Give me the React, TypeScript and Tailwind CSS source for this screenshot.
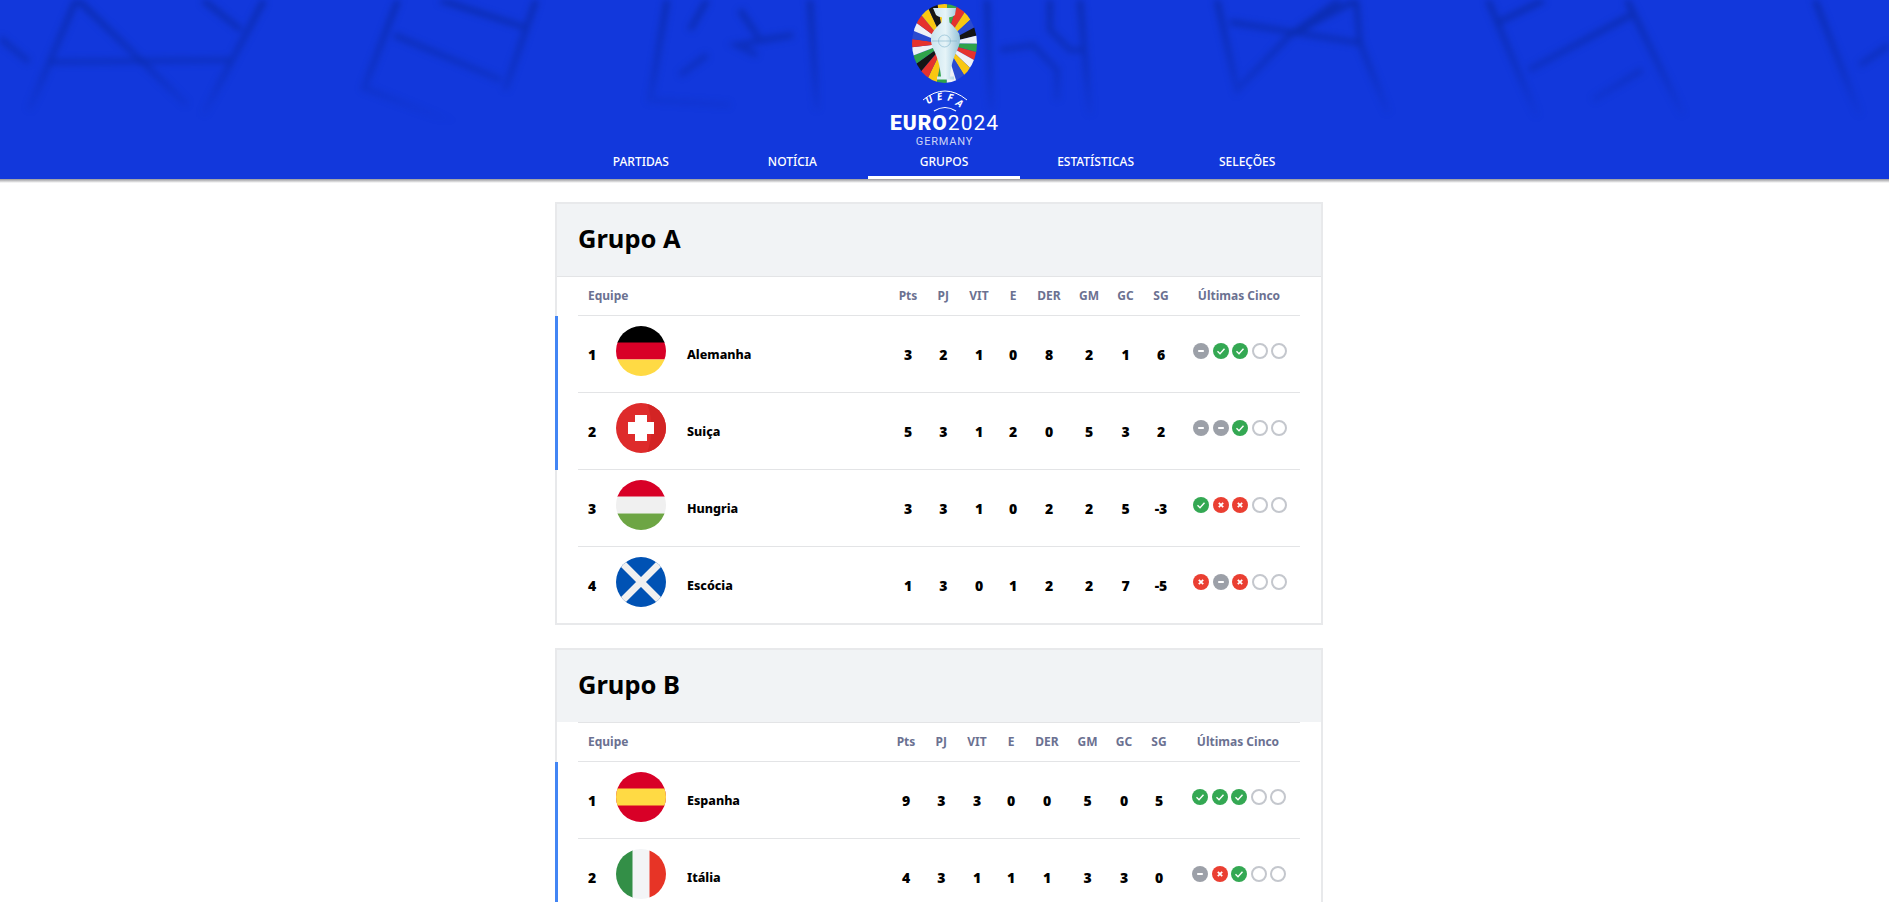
import React from "react";

type Res = "w" | "d" | "l" | "e";

type Team = {
  name: string;
  flag: React.ReactNode;
  stats: (number | string)[];
  form: Res[];
};

const FONT = "[font-family:'Noto_Sans',sans-serif]";

const GRID_A = "grid grid-cols-[310.5px_39px_31.5px_40px_28px_44px_36px_37px_34px_122px]";
const GRID_B = "grid grid-cols-[308.5px_39px_31.5px_40px_28px_44px_37px_36px_34px_124px]";

const HEADS = ["Pts", "PJ", "VIT", "E", "DER", "GM", "GC", "SG"];

const NAV = ["PARTIDAS", "NOTÍCIA", "GRUPOS", "ESTATÍSTICAS", "SELEÇÕES"];

// background doodles, traced from the header
const DOODLES = [
  "M76 0L29 110",
  "M78 0L187 105",
  "M50 62L230 60",
  "M203 0L241 30",
  "M264 0L203 115",
  "M0 38L29 62",
  "M398 0L364 88L459 125",
  "M394 35L501 80",
  "M440 0L524 27",
  "M536 0L505 90",
  "M667 0L650 100L730 105",
  "M810 0L817 110",
  "M707 0L690 30",
  "M740 10L760 40L793 35L737 45L757 55",
  "M707 55L680 75",
  "M987 0L991 110",
  "M1050 0L1050 30L1070 50L1083 50",
  "M1080 0L1090 115",
  "M1000 50L1033 45L1057 70L1057 100",
  "M1217 0L1237 90L1290 35L1340 0",
  "M1230 22L1360 43L1388 113",
  "M1356 0L1360 43",
  "M1300 30L1356 0",
  "M1488 0L1537 117",
  "M1499 22L1544 0",
  "M1529 70L1631 15",
  "M1627 0L1683 115",
  "M1593 100L1642 70",
  "M1815 0L1860 115",
  "M1860 65L1889 45",
];

const WEDGES = [
  "#f9c712", "#38a84a", "#e5322d", "#f9c712", "#2a4bd0", "#151515", "#eef1f6", "#2fa34a",
  "#e5322d", "#eef1f6", "#f9c712", "#2a4bd0", "#eef1f6", "#2fa34a", "#f9c712", "#e5322d",
  "#151515", "#2fa34a", "#eef1f6", "#e5322d", "#2a4bd0", "#eef1f6", "#e5322d", "#f9c712",
  "#151515",
];

function Logo() {
  const n = WEDGES.length;
  return (
    <svg width="65" height="79" viewBox="0 0 65 79" className="block">
      <defs>
        <clipPath id="oval">
          <ellipse cx="32.5" cy="39.5" rx="32.5" ry="39.5" />
        </clipPath>
        <linearGradient id="cup" x1="0" y1="0" x2="1" y2="0">
          <stop offset="0" stopColor="#c9e3ee" />
          <stop offset="0.5" stopColor="#e6f4f8" />
          <stop offset="1" stopColor="#94c2d8" />
        </linearGradient>
      </defs>
      <g clipPath="url(#oval)">
        {WEDGES.map((c, i) => {
          const a0 = (i / n) * 2 * Math.PI - 0.18;
          const a1 = ((i + 1) / n) * 2 * Math.PI - 0.18;
          const p = (a: number) => `${32.5 + Math.sin(a) * 60} ${39.5 - Math.cos(a) * 60}`;
          return <path key={i} d={`M32.5 39.5L${p(a0)}L${p(a1)}Z`} fill={c} />;
        })}
      </g>
      <path
        d="M21 4h23l-1 7c-2 1.500-4 2-6 2.500l.5 5c4 3 7 7 9.500 11 2 5 1 11-2 17-3.500 7-6 15-7 26h4v3h-17v-3h4c-1-11-3.500-19-7-26-3-6-4-12-2-17 2.500-4 5.500-8 9.500-11l.5-5c-2-.5-4-1-6-2.500z"
        fill="url(#cup)"
      />
      <circle cx="32.500" cy="37" r="6" fill="none" stroke="#7fb4cb" strokeWidth="0.6" />
      <path d="M20 37h25" stroke="#7fb4cb" strokeWidth="0.6" />
    </svg>
  );
}

function Header() {
  return (
    <header className="relative z-10 h-[179px] w-full overflow-hidden bg-[#1238dc]">
      <svg
        width="1889"
        height="179"
        viewBox="0 0 1889 179"
        className="absolute left-0 top-0 blur-[3px]"
      >
        <defs>
          <linearGradient id="fade" gradientUnits="userSpaceOnUse" x1="0" y1="0" x2="0" y2="122">
            <stop offset="0" stopColor="#0a2aa8" stopOpacity="0.8" />
            <stop offset="0.6" stopColor="#0a2aa8" stopOpacity="0.45" />
            <stop offset="1" stopColor="#0a2aa8" stopOpacity="0" />
          </linearGradient>
        </defs>
        {DOODLES.map((d) => (
          <path key={d} d={d} fill="none" stroke="url(#fade)" strokeWidth="6" />
        ))}
      </svg>

      <div className="relative flex h-full flex-col items-center pt-[4px]">
        <Logo />
        <svg width="50" height="24" viewBox="0 0 50 24" className="mt-[6px] block">
          <text
            className={FONT}
            fontSize="10"
            fontWeight="700"
            fontStyle="italic"
            fill="#fff"
            x="8 17.500 27 35"
            y="15.500 11.500 11.500 15.500"
            rotate="-32 -11 11 32"
          >
            UEFA
          </text>
          <path d="M14 22Q25 15 36 22" fill="none" stroke="#fff" strokeWidth="1.200" />
          <path d="M3 11Q25 -7 47 11" fill="none" stroke="#fff" strokeWidth="1" />
        </svg>
        <div className="-mt-[1px] flex h-[23px] items-center font-['Roboto',sans-serif] text-[21px] leading-[23px] tracking-[1px] text-white">
          <span className="font-black">EURO</span>
          <span className="font-normal">2024</span>
        </div>
        <div className="h-[13px] font-['Roboto',sans-serif] text-[11px] leading-[13px] tracking-[0.8px] text-[#cdd5f6]">
          GERMANY
        </div>

        <nav className="absolute bottom-0 left-[565px] flex h-[34px] w-[758px]">
          {NAV.map((item) => (
            <a
              key={item}
              className={`${FONT} flex flex-1 items-center justify-center border-b-[3px] pt-[3px] text-[12px] font-medium text-white ${
                item === "GRUPOS" ? "border-white" : "border-transparent"
              }`}
            >
              {item}
            </a>
          ))}
        </nav>
      </div>
    </header>
  );
}

function Dot({ r }: { r: Res }) {
  if (r === "e") {
    return <span className="h-4 w-4 rounded-full border-2 border-[#c4c7cd] bg-white" />;
  }
  const bg = r === "w" ? "bg-[#34a853]" : r === "l" ? "bg-[#ea3f32]" : "bg-[#9ca0a8]";
  return (
    <span className={`flex h-4 w-4 items-center justify-center rounded-full ${bg}`}>
      <svg width="16" height="16" viewBox="0 0 16 16" fill="none" stroke="#fff" strokeWidth="1.4">
        {r === "w" && <path d="M4.500 8.300L7 10.700L11.500 5.800" />}
        {r === "l" && <path d="M5.800 5.800L10.200 10.200M10.200 5.800L5.800 10.200" strokeWidth="1.800" />}
        {r === "d" && <path d="M5.200 8H10.800" strokeWidth="2" />}
      </svg>
    </span>
  );
}

function Flag({ children }: { children: React.ReactNode }) {
  return (
    <svg width="50" height="50" viewBox="0 0 50 50" className="-mt-[7px] block rounded-full">
      {children}
    </svg>
  );
}

const Germany = (
  <Flag>
    <rect width="50" height="17" fill="#000" />
    <rect y="16.500" width="50" height="17" fill="#d80027" />
    <rect y="33.500" width="50" height="17" fill="#ffda44" />
  </Flag>
);

const Swiss = (
  <Flag>
    <rect width="50" height="50" fill="#de2b2b" />
    <path d="M31 0H50V50H31Q40 25 31 0Z" fill="#d32424" />
    <path d="M19 12H31V19H38V31H31V38H19V31H12V19H19Z" fill="#fff" />
  </Flag>
);

const Hungary = (
  <Flag>
    <rect width="50" height="17" fill="#d80027" />
    <rect y="16.500" width="50" height="17" fill="#f0f0f0" />
    <rect y="33.500" width="50" height="17" fill="#6da544" />
  </Flag>
);

const Scotland = (
  <Flag>
    <rect width="50" height="50" fill="#0052b4" />
    <path d="M0 0L50 50M50 0L0 50" stroke="#f0f0f0" strokeWidth="7" />
  </Flag>
);

const Spain = (
  <Flag>
    <rect width="50" height="50" fill="#d80027" />
    <rect y="16.500" width="50" height="17" fill="#ffda44" />
  </Flag>
);

const Italy = (
  <Flag>
    <rect width="17" height="50" fill="#338f47" />
    <rect x="16.500" width="17" height="50" fill="#f3f4f6" />
    <rect x="33.500" width="17" height="50" fill="#e73426" />
  </Flag>
);

const GROUP_A: Team[] = [
  { name: "Alemanha", flag: Germany, stats: [3, 2, 1, 0, 8, 2, 1, 6], form: ["d", "w", "w", "e", "e"] },
  { name: "Suiça", flag: Swiss, stats: [5, 3, 1, 2, 0, 5, 3, 2], form: ["d", "d", "w", "e", "e"] },
  { name: "Hungria", flag: Hungary, stats: [3, 3, 1, 0, 2, 2, 5, -3], form: ["w", "l", "l", "e", "e"] },
  { name: "Escócia", flag: Scotland, stats: [1, 3, 0, 1, 2, 2, 7, -5], form: ["l", "d", "l", "e", "e"] },
];

const GROUP_B: Team[] = [
  { name: "Espanha", flag: Spain, stats: [9, 3, 3, 0, 0, 5, 0, 5], form: ["w", "w", "w", "e", "e"] },
  { name: "Itália", flag: Italy, stats: [4, 3, 1, 1, 1, 3, 3, 0], form: ["d", "l", "w", "e", "e"] },
];

function GroupCard({
  title,
  teams,
  grid,
  fullRule,
}: {
  title: string;
  teams: Team[];
  grid: string;
  fullRule?: boolean;
}) {
  return (
    <section className="w-[768px] border-2 border-[#e8e9eb] bg-white">
      <div
        className={`flex items-center bg-[#f1f3f5] pb-[2px] pl-[21px] ${
          fullRule ? "h-[73px] border-b border-[#e3e4e6]" : "h-[72px]"
        }`}
      >
        <h2 className={`${FONT} text-[25.500px] font-bold leading-none text-black`}>{title}</h2>
      </div>
      <div className="mx-[21px]">
        <div
          className={`${grid} items-center border-b border-[#e3e4e6] text-[12px] font-bold text-[#6b7191] ${FONT} ${
            fullRule ? "h-[39px]" : "h-[40px] border-t"
          }`}
        >
          <div className="pl-[10px]">Equipe</div>
          {HEADS.map((h) => (
            <div key={h} className="text-center">
              {h}
            </div>
          ))}
          <div className="text-center">Últimas Cinco</div>
        </div>
        {teams.map((t, i) => (
          <div
            key={t.name}
            className={`${grid} relative h-[77px] items-center border-b border-[#e3e4e6] last:h-[76px] last:border-b-0 ${FONT}`}
          >
            {i < 2 && <span className="absolute -left-[23px] top-0 -bottom-px w-[3px] bg-[#4285f4]" />}
            <div className="flex items-center">
              <span className="w-[38px] pl-[10px] pt-[1px] text-[14px] font-black text-black">{i + 1}</span>
              {t.flag}
              <span className="ml-[21px] pt-[2px] text-[12.500px] font-extrabold text-black">{t.name}</span>
            </div>
            {t.stats.map((s, j) => (
              <div key={j} className="pt-[1px] text-center text-[14px] font-black text-black">
                {s}
              </div>
            ))}
            <div className="flex -translate-y-[3px] justify-center gap-[3.500px] pl-[2px]">
              {t.form.map((r, j) => (
                <Dot key={j} r={r} />
              ))}
            </div>
          </div>
        ))}
      </div>
    </section>
  );
}

export default function App() {
  return (
    <div className="h-[902px] w-full overflow-hidden bg-white">
      <Header />
      <div className="relative z-10 h-[4px] bg-gradient-to-b from-[#97979b] to-white" />
      <main className="ml-[555px] mt-[19px] flex flex-col gap-[23px]">
        <GroupCard title="Grupo A" teams={GROUP_A} grid={GRID_A} fullRule />
        <GroupCard title="Grupo B" teams={GROUP_B} grid={GRID_B} />
      </main>
    </div>
  );
}
